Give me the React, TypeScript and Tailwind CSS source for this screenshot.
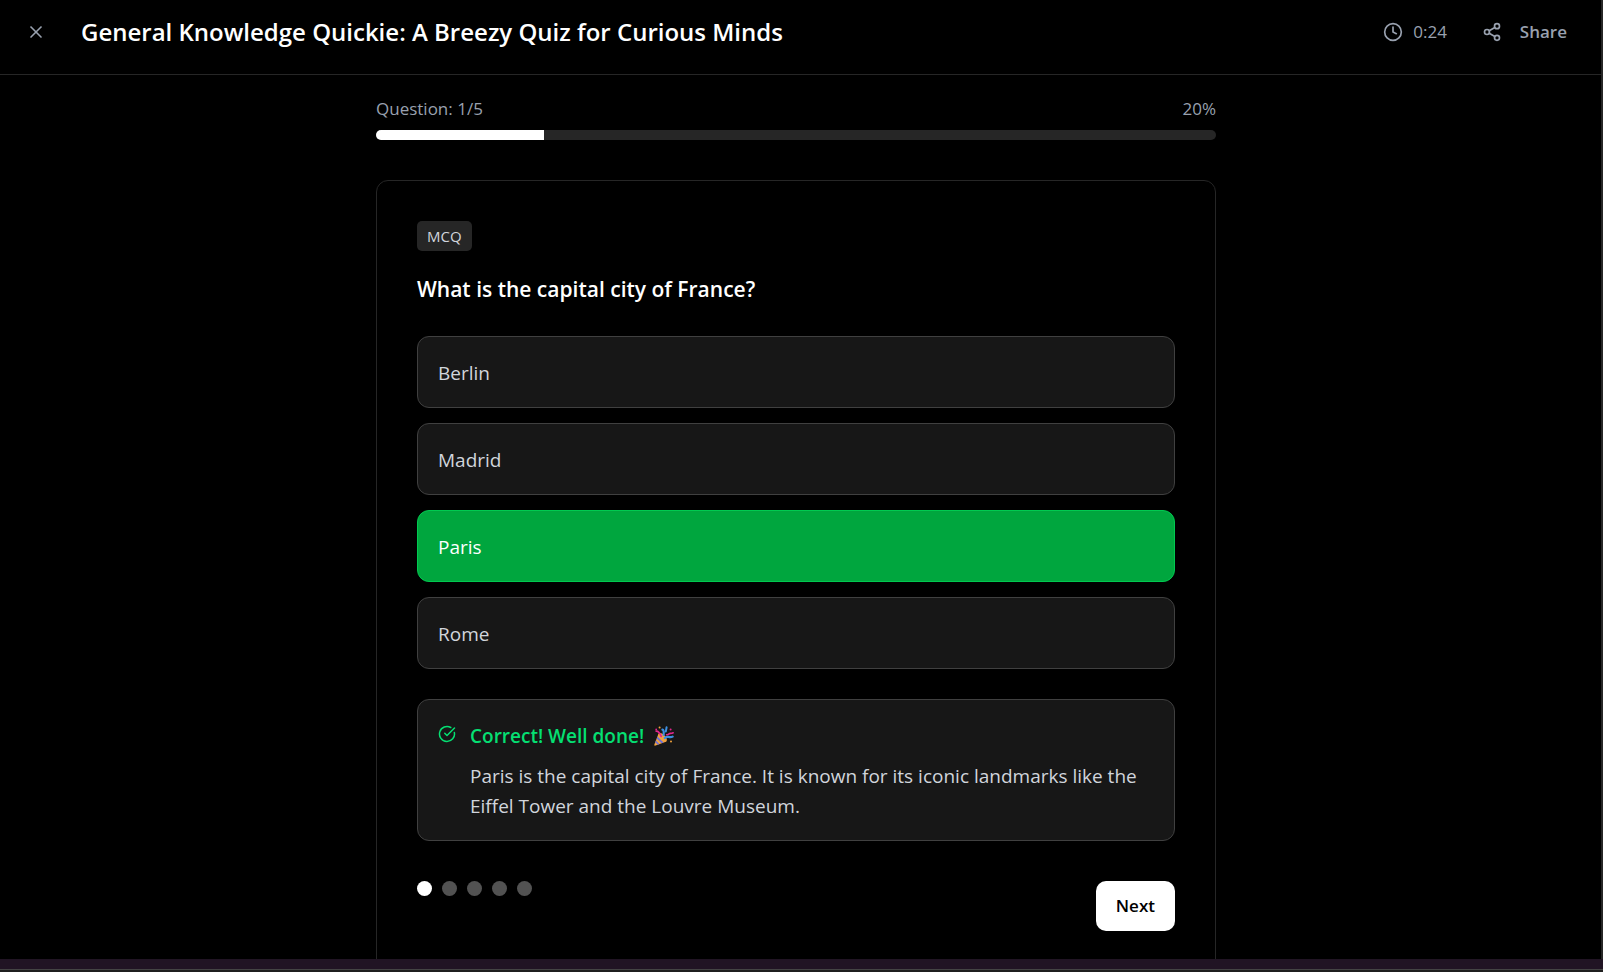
import { useState } from 'react';
import { CircleCheckBig, Clock, Share2, X } from 'lucide-react';
import clsx from 'clsx';

const TOTAL_QUESTIONS = 5;

const question = {
  type: 'MCQ',
  text: 'What is the capital city of France?',
  options: ['Berlin', 'Madrid', 'Paris', 'Rome'],
  answer: 'Paris',
  explanation:
    'Paris is the capital city of France. It is known for its iconic landmarks like the Eiffel Tower and the Louvre Museum.',
};

function PartyPopper() {
  return (
    <svg viewBox="0 0 20 20" className="h-5 w-5 shrink-0" role="img" aria-label="Party popper">
      <path d="M4.6 7.4 12.6 15.4 1.6 19.6C.7 19.9.1 19.3.4 18.4z" fill="#f2a33c" />
      <path d="M3.4 10.4 9.6 16.6 7.6 17.3 2.7 12.4z" fill="#6b6fd6" />
      <path d="M1.9 14.4 5.5 18.1 3.8 18.8 1.2 16.2z" fill="#6b6fd6" />
      <ellipse cx="8.7" cy="11.3" rx="2.6" ry="5.4" transform="rotate(-45 8.7 11.3)" fill="#f0a040" />
      <path d="M2.2 5.2C4.6 5 5.6 6.6 7.2 10.4" fill="none" stroke="#e3268c" strokeWidth="1.8" strokeLinecap="round" />
      <path d="M8.4 3.6C10.4 4 9.8 6.4 9.6 9" fill="none" stroke="#3d8fe0" strokeWidth="2.2" strokeLinecap="round" />
      <path d="M12.6 1.2 11.8 5.6" fill="none" stroke="#3d8fe0" strokeWidth="2" strokeLinecap="round" />
      <path d="M10.8 12C13 9 15.2 12.4 18.6 10.6" fill="none" stroke="#3d8fe0" strokeWidth="2.2" strokeLinecap="round" />
      <path d="M12.6 8.8C14.4 8.8 14.8 7.4 16.4 7.4 17.6 7.4 18.4 7.2 19.2 6.8" fill="none" stroke="#e3268c" strokeWidth="1.6" strokeLinecap="round" />
      <circle cx="5.6" cy="1.4" r="1" fill="#f2a33c" />
      <circle cx="2.2" cy="3.4" r="0.9" fill="#e3268c" />
      <circle cx="16.6" cy="3.6" r="1" fill="#e3268c" />
      <circle cx="17" cy="15.4" r="1" fill="#f2a33c" />
    </svg>
  );
}

function Header() {
  return (
    <header className="flex items-center justify-between border-b border-neutral-800 pt-4 pr-[34px] pb-[26px] pl-[26px]">
      <div className="flex items-center gap-[35px]">
        <button aria-label="Close quiz" className="text-[#99a1af]">
          <X className="h-5 w-5" />
        </button>
        <h1 className="text-[24px] leading-8 font-semibold text-white">
          General Knowledge Quickie: A Breezy Quiz for Curious Minds
        </h1>
      </div>
      <div className="flex items-center gap-[35px] text-[17px] leading-8 text-[#99a1af]">
        <div className="flex items-center gap-[10px]">
          <Clock className="h-5 w-5" />
          <span>0:24</span>
        </div>
        <button className="flex items-center gap-[18px] font-semibold">
          <Share2 className="h-5 w-5" />
          Share
        </button>
      </div>
    </header>
  );
}

function Progress({ current }: { current: number }) {
  const percent = (current / TOTAL_QUESTIONS) * 100;

  return (
    <div>
      <div className="mb-[9px] flex justify-between text-[17px] leading-[25px] text-[#99a1af]">
        <span>
          Question: {current}/{TOTAL_QUESTIONS}
        </span>
        <span>{percent}%</span>
      </div>
      <div className="h-[10px] overflow-hidden rounded-full bg-neutral-800">
        <div className="h-full bg-white" style={{ width: `${percent}%` }} />
      </div>
    </div>
  );
}

export default function App() {
  const [selected, setSelected] = useState('Paris');
  const isCorrect = selected === question.answer;

  return (
    <div className="flex h-screen flex-col bg-[#1f1f1f] font-['Open_Sans','Noto_Sans',sans-serif]">
      <div className="flex min-h-0 flex-1 flex-col overflow-hidden border-r-2 border-[#262626] bg-black">
        <Header />
        <main className="min-h-0 flex-1 overflow-hidden pt-[21px] pr-[9px]">
          <div className="mx-auto max-w-[840px]">
            <Progress current={1} />

            <section className="mt-10 rounded-xl border border-neutral-800 p-10">
              <span className="inline-block rounded-[5px] bg-neutral-800 px-[10px] align-top text-[15px] leading-[30px] text-[#d1d5dc]">
                {question.type}
              </span>
              <h2 className="mt-[21px] text-[21px] leading-[35px] font-semibold text-white">{question.text}</h2>

              <div className="mt-[29px] flex flex-col gap-[15px]">
                {question.options.map((option) => (
                  <button
                    key={option}
                    onClick={() => setSelected(option)}
                    className={clsx(
                      'rounded-xl border px-5 pt-[21px] pb-[19px] text-left text-[19px] leading-[30px]',
                      option === selected
                        ? 'border-[#00c950] bg-[#00a63e] text-white'
                        : 'border-neutral-700 bg-neutral-900 text-[#d1d5dc]'
                    )}
                  >
                    {option}
                  </button>
                ))}
              </div>

              {isCorrect && (
                <div className="mt-[30px] flex gap-[14px] rounded-xl border border-neutral-700 bg-neutral-900 px-5 pt-[21px] pb-[19px]">
                  <CircleCheckBig className="mt-1 h-[18px] w-[18px] shrink-0 text-[#05df72]" />
                  <div>
                    <p className="flex items-center gap-[10px] text-[19px] leading-[30px] font-semibold text-[#05df72]">
                      Correct! Well done!
                      <PartyPopper />
                    </p>
                    <p className="mt-[10px] text-[19px] leading-[30px] text-[#d1d5dc]">{question.explanation}</p>
                  </div>
                </div>
              )}

              <div className="mt-10 flex items-start justify-between">
                <div className="flex gap-[10px]">
                  {Array.from({ length: TOTAL_QUESTIONS }, (_, i) => (
                    <span
                      key={i}
                      className={clsx('h-[15px] w-[15px] rounded-full', i === 0 ? 'bg-white' : 'bg-neutral-600')}
                    />
                  ))}
                </div>
                <button className="rounded-[10px] bg-white px-5 text-[17px] leading-[50px] font-semibold text-black">
                  Next
                </button>
              </div>
            </section>
          </div>
        </main>
      </div>
      <div className="mb-0.5 h-[11px] shrink-0 border-b border-[#444444] bg-[#211424]" />
    </div>
  );
}
